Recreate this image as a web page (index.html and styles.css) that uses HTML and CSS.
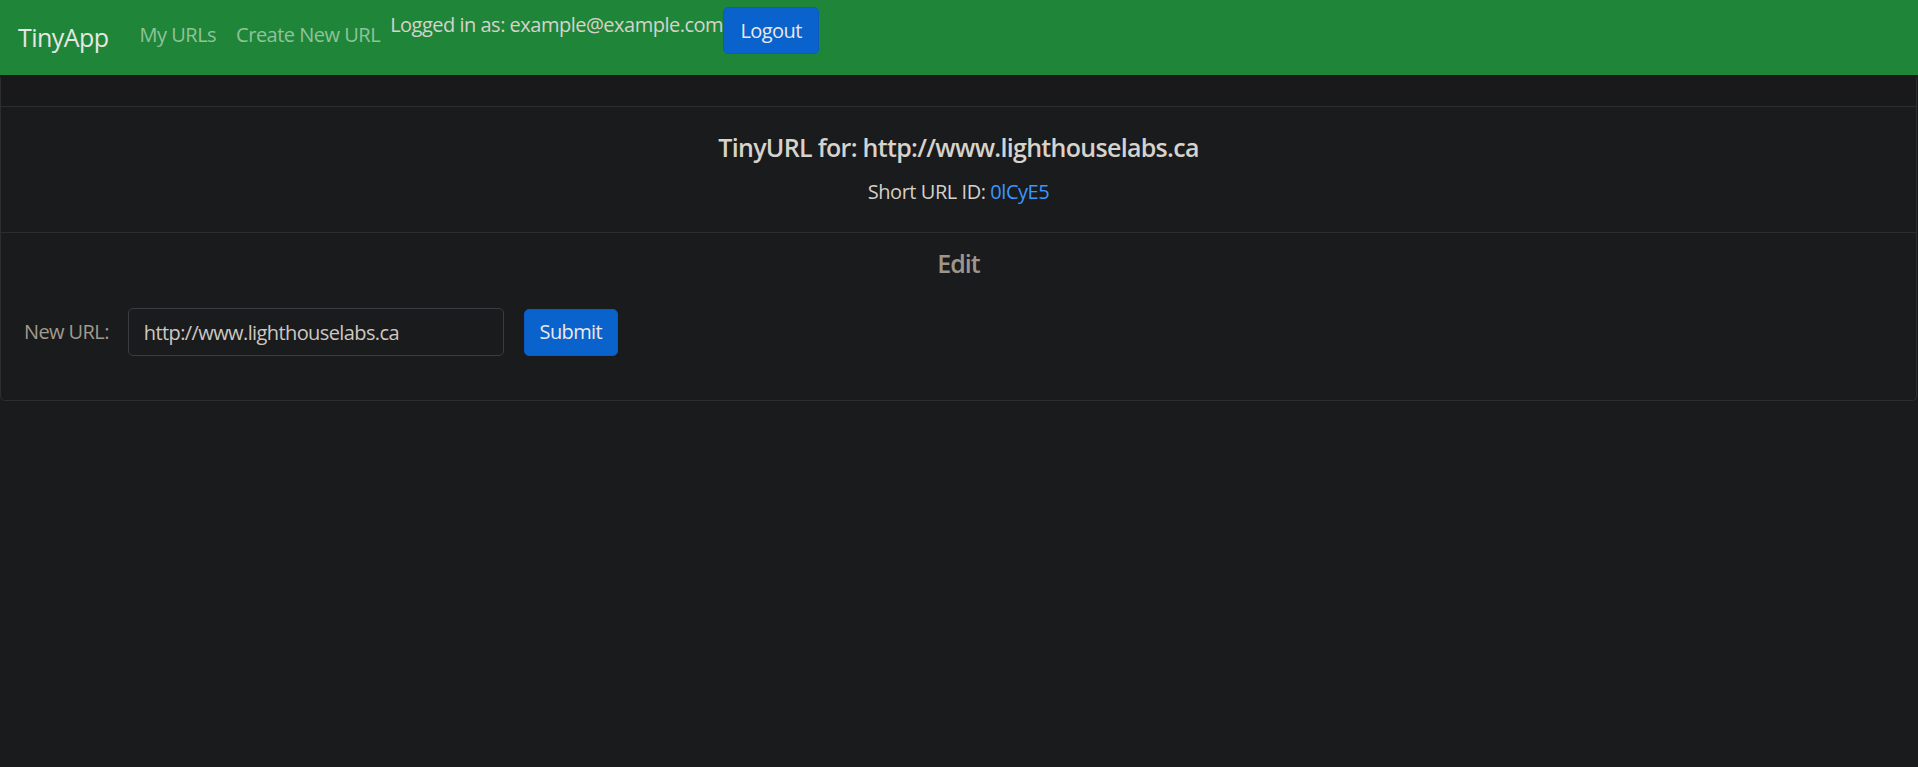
FILE: index.html
```html
<!DOCTYPE html>
<html lang="en">
<head>
<meta charset="utf-8">
<title>TinyApp</title>
<link rel="stylesheet" href="styles.css">
</head>
<body>
<nav class="navbar">
  <a class="brand" href="#">TinyApp</a>
  <ul class="nav-links">
    <li><a class="nav-link" href="#">My URLs</a></li>
    <li><a class="nav-link" href="#">Create New URL</a></li>
  </ul>
  <form class="user-box">
    <span class="user-text">Logged in as: example@example.com</span>
    <button class="btn btn-primary logout" type="button">Logout</button>
  </form>
</nav>
<main>
  <div class="card">
    <div class="card-header"></div>
    <div class="card-body">
      <h5 class="card-title">TinyURL for: http://www.lighthouselabs.ca</h5>
      <p class="card-text">Short URL ID: <a class="short-link" href="#">0lCyE5</a></p>
    </div>
    <div class="card-footer">
      <h5 class="edit-title">Edit</h5>
      <form class="edit-form">
        <label class="edit-label" for="longURL">New URL:</label>
        <input class="form-control" id="longURL" type="text" value="http://www.lighthouselabs.ca">
        <button class="btn btn-primary" type="button">Submit</button>
      </form>
    </div>
  </div>
</main>
</body>
</html>
```
FILE: styles.css
```css
* { box-sizing: border-box; }

html, body {
  margin: 0;
  padding: 0;
  background: #1a1b1d;
}

body {
  font-family: "Open Sans", "Noto Sans", sans-serif;
  font-size: 20px;
  line-height: 1.5;
  color: #d4d0ca;
}

a { text-decoration: none; }

.navbar {
  height: 75px;
  background: #1f8639;
  display: flex;
  align-items: center;
  padding: 0 18px;
}

.brand {
  font-size: 25px;
  color: #e8e6e3;
  margin-right: 21px;
  letter-spacing: -0.55px;
  line-height: 1.5;
}

.nav-links {
  list-style: none;
  display: flex;
  margin: 0;
  padding: 0;
}

.nav-link {
  display: block;
  padding: 0 10px;
  color: #8fc39a;
  letter-spacing: -0.5px;
  margin-top: -6px;
}

.user-box {
  align-self: flex-start;
  margin: 7px 0 0;
  display: flex;
  align-items: flex-start;
}

.user-text {
  color: #d6d2cc;
  line-height: 30px;
  padding-top: 3px;
  letter-spacing: -0.5px;
}

.btn {
  font-family: inherit;
  font-size: 20px;
  line-height: 30px;
  border-radius: 5px;
  border: 1px solid transparent;
  padding: 7.5px 15px;
  cursor: pointer;
  letter-spacing: -0.6px;
}

.btn-primary {
  background: #0a62cc;
  border-color: #0a5cc0;
  color: #ece9e5;
}

.logout {
  width: 96px;
  height: 47px;
  padding: 0;
}

.card {
  border: 1px solid #2c2e30;
  border-top-color: #16181a;
  border-radius: 5px;
  margin-right: 1px;
  background: #1a1b1d;
}

.card-header {
  height: 31px;
  border-bottom: 1px solid #2b2d2f;
  background: #19191b;
}

.card-body {
  padding: 25px;
  text-align: center;
}

.card-title {
  margin: 0 0 15px;
  font-size: 25px;
  line-height: 30px;
  font-weight: 600;
  color: #d6d2cc;
  letter-spacing: -0.7px;
}

.card-text {
  margin: 0;
  line-height: 30px;
  color: #d4d0ca;
  letter-spacing: -0.45px;
}

.short-link {
  color: #3a95ff;
}

.card-footer {
  border-top: 1px solid #2b2d2f;
  padding: 15px 25px 0;
}

.edit-title {
  margin: 0 0 30px;
  text-align: center;
  font-size: 25px;
  line-height: 30px;
  font-weight: 600;
  color: #9d968c;
  letter-spacing: -1px;
}

.edit-form {
  display: flex;
  align-items: center;
  margin-bottom: 44px;
}

.edit-label {
  color: #a29a8e;
  margin-right: 19px;
  letter-spacing: -0.6px;
  margin-left: -2px;
}

.form-control {
  width: 376px;
  height: 48px;
  padding: 7.5px 15px;
  font-family: inherit;
  font-size: 20px;
  line-height: 30px;
  color: #cdc8c1;
  background: #1a1b1d;
  border: 1px solid #3a3d40;
  border-radius: 5px;
  margin-right: 20px;
  letter-spacing: -0.6px;
}

.edit-form .btn {
  height: 47px;
  width: 94px;
  padding: 0;
}
```
